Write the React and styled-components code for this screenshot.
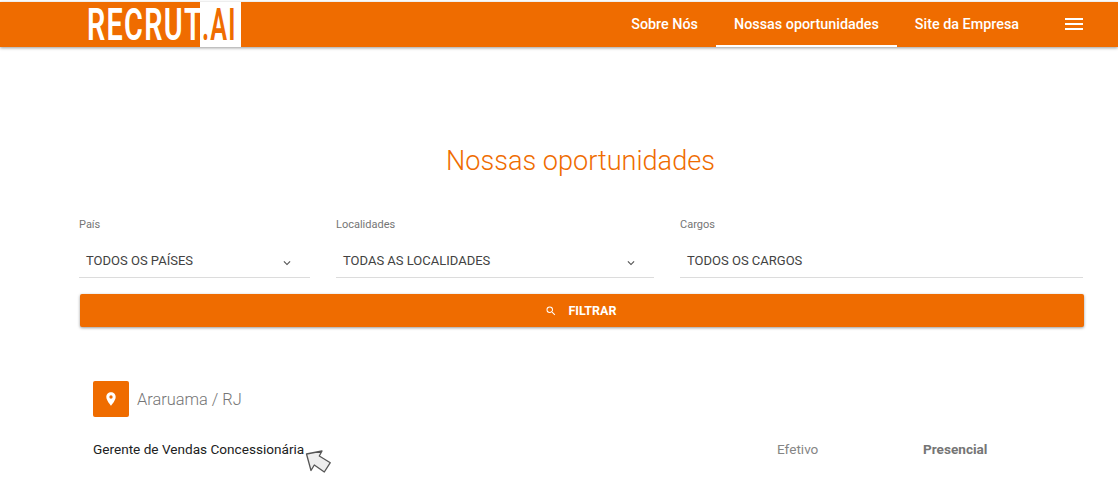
import React from "react";
import styled, { createGlobalStyle } from "styled-components";

const orange = "#ef6c00";

const GlobalStyle = createGlobalStyle`
  html, body {
    margin: 0;
    padding: 0;
    height: 100%;
    background: #fff;
    overflow: hidden;
    font-family: Roboto, "Liberation Sans", sans-serif;
  }
`;

const Header = styled.header`
  display: flex;
  justify-content: space-between;
  height: 45px;
  margin-top: 2px;
  padding: 0 18px 0 87px;
  background: ${orange};
  box-shadow: 0 1px 3px rgba(0, 0, 0, 0.4);
`;
const Logo = styled.div`
  display: flex;
  align-items: stretch;
`;
const LogoPart = styled.span`
  display: block;
  width: ${(p) => p.$width}px;
  font-size: 45px;
  line-height: 45px;
  font-weight: 600;
  letter-spacing: 2px;
  white-space: nowrap;
  transform-origin: left center;
  transform: scaleX(${(p) => p.$scale});
  color: ${(p) => (p.$boxed ? orange : "#fff")};
`;
const LogoBox = styled.div`
  width: 41px;
  margin-left: 1px;
  padding-left: 2px;
  box-sizing: border-box;
  background: #fff;
`;
const Nav = styled.nav`
  display: flex;
  align-items: stretch;
`;
const Tab = styled.a`
  display: flex;
  align-items: center;
  padding: 2px 18px 0;
  font-size: 14.35px;
  font-weight: 500;
  color: #fff;
  border-bottom: 2px solid ${(p) => (p.$active ? "#fff" : "transparent")};
  box-sizing: border-box;
`;
const MenuButton = styled.button`
  display: flex;
  align-items: center;
  width: 38px;
  margin-left: 25px;
  padding: 0 0 1px;
  border: 0;
  background: none;
  color: #fff;
`;
const Main = styled.main`
  padding: 0 34px 0 79px;
`;
const Title = styled.h1`
  margin: 96px 0 0;
  padding-right: 2px;
  font-size: 27.1px;
  line-height: 36px;
  font-weight: 300;
  text-align: center;
  color: ${orange};
`;
const Filters = styled.div`
  display: grid;
  grid-template-columns: 231px 318px 403px;
  column-gap: 26px;
  margin-top: 39px;
`;
const Field = styled.div`
  display: flex;
  flex-direction: column;
`;
const Label = styled.label`
  font-size: 11px;
  line-height: 13px;
  color: #757575;
`;
const Value = styled.div`
  display: flex;
  align-items: center;
  justify-content: space-between;
  height: 34px;
  margin-top: 12px;
  padding: 0 16px 0 7px;
  font-size: 13px;
  color: #424242;
  border-bottom: 1px solid #dcdcdc;
`;
const Chevron = styled.svg`
  width: 14px;
  height: 14px;
  margin-top: 5px;
  color: #555;
`;
const FilterButton = styled.button`
  display: flex;
  align-items: center;
  justify-content: center;
  gap: 11px;
  width: 1004px;
  height: 33px;
  margin: 16px 0 0 1px;
  padding: 0 2px 0 0;
  border: 0;
  border-radius: 2px;
  background: ${orange};
  color: #fff;
  font-family: inherit;
  font-size: 12.5px;
  font-weight: 700;
  box-shadow: 0 1px 3px rgba(0, 0, 0, 0.4);
`;
const Location = styled.div`
  display: flex;
  align-items: center;
  gap: 8px;
  margin: 54px 0 0 14px;
`;
const PinBox = styled.div`
  display: flex;
  align-items: center;
  justify-content: center;
  width: 36px;
  height: 36px;
  border-radius: 2px;
  background: ${orange};
`;
const City = styled.span`
  font-size: 16.4px;
  font-weight: 300;
  color: #757575;
`;
const JobRow = styled.div`
  position: relative;
  display: grid;
  grid-template-columns: 684px 146px auto;
  align-items: center;
  margin: 23px 0 0 14px;
  font-size: 13.6px;
  line-height: 18px;
`;
const JobName = styled.span`
  color: #212121;
`;
const JobType = styled.span`
  color: #858585;
`;
const JobMode = styled.span`
  font-weight: 700;
  color: #757575;
`;
const Cursor = styled.svg`
  position: absolute;
  left: 212px;
  top: 10px;
  width: 27px;
  height: 24px;
`;

const App = () => {
  const filters = [
    { label: "País", value: "TODOS OS PAÍSES", select: true },
    { label: "Localidades", value: "TODAS AS LOCALIDADES", select: true },
    { label: "Cargos", value: "TODOS OS CARGOS" },
  ];

  return (
    <>
      <GlobalStyle />
      <Header>
        <Logo>
          <LogoPart $width={112} $scale={0.64}>RECRUT</LogoPart>
          <LogoBox>
            <LogoPart $boxed $width={39} $scale={0.56}>.AI</LogoPart>
          </LogoBox>
        </Logo>
        <Nav>
          <Tab>Sobre Nós</Tab>
          <Tab $active>Nossas oportunidades</Tab>
          <Tab>Site da Empresa</Tab>
          <MenuButton aria-label="Menu">
            <svg width="24" height="24" viewBox="0 0 24 24" fill="currentColor">
              <path d="M3 18h18v-2H3v2zm0-5h18v-2H3v2zm0-7v2h18V6H3z" />
            </svg>
          </MenuButton>
        </Nav>
      </Header>
      <Main>
        <Title>Nossas oportunidades</Title>
        <Filters>
          {filters.map((f) => (
            <Field key={f.label}>
              <Label>{f.label}</Label>
              <Value>
                {f.value}
                {f.select && (
                  <Chevron viewBox="0 0 24 24" fill="currentColor">
                    <path d="M7.41 8.59 12 13.17l4.59-4.58L18 10l-6 6-6-6z" />
                  </Chevron>
                )}
              </Value>
            </Field>
          ))}
        </Filters>
        <FilterButton>
          <svg width="12" height="12" viewBox="0 0 24 24" fill="currentColor">
            <path d="M15.5 14h-.79l-.28-.27A6.47 6.47 0 0 0 16 9.5 6.5 6.5 0 1 0 9.5 16c1.61 0 3.09-.59 4.23-1.57l.27.28v.79l5 4.99L20.49 19l-4.99-5zm-6 0C7.01 14 5 11.99 5 9.5S7.01 5 9.5 5 14 7.01 14 9.5 11.99 14 9.5 14z" />
          </svg>
          FILTRAR
        </FilterButton>
        <Location>
          <PinBox>
            <svg width="16" height="16" viewBox="0 0 24 24" fill="#fff">
              <path d="M12 2C8.13 2 5 5.13 5 9c0 5.25 7 13 7 13s7-7.75 7-13c0-3.87-3.13-7-7-7zm0 9.5a2.5 2.5 0 0 1 0-5 2.5 2.5 0 0 1 0 5z" />
            </svg>
          </PinBox>
          <City>Araruama / RJ</City>
        </Location>
        <JobRow>
          <JobName>Gerente de Vendas Concessionária</JobName>
          <JobType>Efetivo</JobType>
          <JobMode>Presencial</JobMode>
          <Cursor viewBox="0 0 27 24">
            <path
              d="M1.5 4 L17 1 L14.3 6 L25.3 12.7 L19.3 22 L9.3 15 L6 20.5 Z"
              fill="#eeeeee"
              stroke="#555"
              strokeWidth="1.3"
              strokeLinejoin="round"
            />
          </Cursor>
        </JobRow>
      </Main>
    </>
  );
};

export default App;
